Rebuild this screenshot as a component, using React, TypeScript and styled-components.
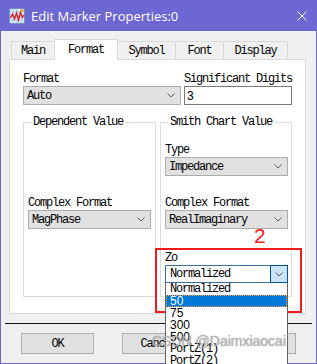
import React from 'react';
import styled, { createGlobalStyle } from 'styled-components';

const MONO = `"Liberation Mono", "Courier New", monospace`;
const SANS = `"Liberation Sans", Arial, sans-serif`;
const TITLE_BG = '#6c67d3';

const Global = createGlobalStyle`
    html, body {
        margin: 0;
        padding: 0;
        overflow: hidden;
        background: #f0f0f0;
    }
`;

const Window = styled.div`
    position: relative;
    width: 317px;
    height: 364px;
    box-sizing: border-box;
    border: 1px solid ${TITLE_BG};
    border-top: none;
    background: #f0f0f0;
    font-family: ${MONO};
    font-size: 12px;
    letter-spacing: -1.2px;
    color: #000;
`;

const TitleBar = styled.div`
    display: flex;
    align-items: center;
    height: 31px;
    margin: 0 -1px;
    padding-left: 9px;
    background: ${TITLE_BG};
    color: #fff;
`;

const Title = styled.span`
    margin-left: 6px;
    font-family: "Open Sans", ${SANS};
    font-size: 13px;
    letter-spacing: 0;
    flex: 1;
`;

const CloseBtn = styled.div`
    display: flex;
    width: 10px;
    height: 10px;
    margin-right: 10px;
`;

const Body = styled.div`
    padding: 8px 8px 0 8px;
`;

const TabRow = styled.div`
    display: flex;
    align-items: flex-end;
    height: 20px;
    padding-left: 2px;
`;

const Tab = styled.div<{ $w: number; $active?: boolean }>`
    position: relative;
    z-index: ${(p) => (p.$active ? 2 : 1)};
    display: flex;
    align-items: center;
    justify-content: center;
    box-sizing: border-box;
    width: ${(p) => p.$w}px;
    height: ${(p) => (p.$active ? 21 : 18)}px;
    margin-bottom: ${(p) => (p.$active ? -1 : 0)}px;
    margin-left: -1px;
    border: 1px solid #d9d9d9;
    border-bottom: none;
    background: ${(p) => (p.$active ? '#fff' : '#f0f0f0')};
    &:first-child {
        margin-left: 0;
    }
`;

const Panel = styled.div`
    position: relative;
    box-sizing: border-box;
    width: 297px;
    height: 255px;
    padding: 13px 0 0 13px;
    border: 1px solid #d9d9d9;
    background: #fff;
`;

const TopRow = styled.div`
    display: flex;
    gap: 3px;
`;

const Field = styled.div`
    display: flex;
    flex-direction: column;
`;

const Label = styled.div<{ $top?: number }>`
    height: 13px;
    line-height: 13px;
    margin-top: ${(p) => p.$top ?? 0}px;
    white-space: nowrap;
`;

const Combo = styled.div<{ $w: number }>`
    position: relative;
    display: flex;
    align-items: center;
    box-sizing: border-box;
    width: ${(p) => p.$w}px;
    height: 19px;
    padding-left: 3px;
    border: 1px solid #adadad;
    background: #e1e1e1;
`;

const ComboText = styled.span`
    flex: 1;
    white-space: nowrap;
`;

const ChevronBox = styled.span`
    display: flex;
    width: 18px;
    justify-content: center;
`;

const TextInput = styled.div`
    display: flex;
    align-items: center;
    box-sizing: border-box;
    width: 108px;
    height: 19px;
    padding-left: 2px;
    border: 1px solid #7a7a7a;
    font-family: ${SANS};
    font-size: 12px;
    letter-spacing: 0;
`;

const Groups = styled.div`
    display: flex;
    gap: 4px;
    margin-top: 11px;
`;

const Group = styled.fieldset<{ $w: number }>`
    box-sizing: border-box;
    width: ${(p) => p.$w}px;
    min-width: 0;
    height: 181px;
    margin: 0;
    padding: 0 4px;
    border: 1px solid #dcdcdc;
`;

const Legend = styled.legend`
    margin-left: 3px;
    padding: 0 3px 0 2px;
    line-height: 13px;
`;

const ZoWrap = styled.div`
    position: relative;
    width: 123px;
`;

const OpenCombo = styled.div`
    display: flex;
    box-sizing: border-box;
    height: 18px;
    border: 1px solid #3d6fa3;
    background: #fff;
`;

const OpenText = styled.span`
    flex: 1;
    display: flex;
    align-items: center;
    padding-left: 4px;
    white-space: nowrap;
`;

const ArrowBtn = styled.span`
    display: flex;
    align-items: center;
    justify-content: center;
    box-sizing: border-box;
    width: 18px;
    margin: -1px -1px -1px 0;
    border: 1px solid #005499;
    background: #cce4f7;
`;

const DropList = styled.div`
    position: absolute;
    z-index: 10;
    top: 100%;
    left: 0;
    right: 0;
    height: 90px;
    border: 1px solid #646464;
    border-top: none;
    background: #fff;
`;

const ListItem = styled.div<{ $sel?: boolean; $num?: boolean }>`
    box-sizing: border-box;
    height: 12px;
    line-height: 11px;
    padding-left: 3px;
    white-space: nowrap;
    font-family: ${(p) => (p.$num ? SANS : MONO)};
    font-size: ${(p) => (p.$num ? 12 : 12)}px;
    letter-spacing: ${(p) => (p.$num ? 0 : -1.2)}px;
    color: ${(p) => (p.$sel ? '#fff' : '#000')};
    background: ${(p) => (p.$sel ? '#0078d7' : 'transparent')};
    border: 1px dotted ${(p) => (p.$sel ? '#f3a53c' : 'transparent')};
    padding-top: 0;
    margin: 0;
`;

const Separator = styled.div`
    width: 307px;
    height: 1px;
    margin: 9px 0 0 -4px;
    background: #111;
`;

const ButtonRow = styled.div`
    display: flex;
    gap: 28px;
    margin: 9px 0 0 12px;
`;

const Button = styled.div`
    display: flex;
    align-items: center;
    justify-content: center;
    box-sizing: border-box;
    width: 73px;
    height: 21px;
    border: 1px solid #adadad;
    background: #e1e1e1;
`;

const Callout = styled.div`
    position: absolute;
    z-index: 5;
    left: 154px;
    top: 248px;
    width: 147px;
    height: 65px;
    box-sizing: border-box;
    border: 2px solid #f21b1b;
`;

const CalloutNumber = styled.div`
    position: absolute;
    z-index: 5;
    left: 253px;
    top: 225px;
    font-family: ${SANS};
    font-size: 21px;
    line-height: 21px;
    letter-spacing: 0;
    color: #f22020;
`;

const Watermark = styled.div`
    position: absolute;
    z-index: 20;
    left: 151px;
    top: 333px;
    font-family: ${SANS};
    font-size: 14px;
    line-height: 16px;
    letter-spacing: 0;
    white-space: nowrap;
    color: rgba(205, 205, 205, 0.8);
    text-shadow: 0 0 1px rgba(70, 70, 70, 0.8);
`;

const AppIcon = () => (
    <svg width="16" height="16" viewBox="0 0 16 16">
        <rect x="0.5" y="0.5" width="15" height="15" rx="1.5" fill="#dcebf7" stroke="#6f93c2" />
        <path d="M4 1v14M8 1v14M12 1v14M1 4h14M1 8h14M1 12h14" stroke="#9fc1e3" strokeWidth="0.8" />
        <polyline points="1.5,10 3.5,6 5.5,11 7.5,5 9.5,12 11.5,4.5 13.5,9.5 15,7" fill="none" stroke="#d7262b" strokeWidth="1.4" />
        <circle cx="13" cy="2.5" r="1.6" fill="#f5a21f" />
    </svg>
);

const Chevron = () => (
    <svg width="8" height="5" viewBox="0 0 8 5">
        <polyline points="0.5,0.5 4,4 7.5,0.5" fill="none" stroke="#5a5a5a" strokeWidth="1" />
    </svg>
);

const tabs: [string, number][] = [
    ['Main', 44],
    ['Format', 64],
    ['Symbol', 59],
    ['Font', 49],
    ['Display', 65],
];

const zoItems: [string, boolean][] = [
    ['Normalized', false],
    ['50', true],
    ['75', true],
    ['300', true],
    ['500', true],
    ['PortZ(1)', false],
    ['PortZ(2)', false],
];

const App = () => {
    return (
        <>
            <Global />
            <Window>
                <TitleBar>
                    <AppIcon />
                    <Title>Edit Marker Properties:0</Title>
                    <CloseBtn>
                        <svg width="10" height="10" viewBox="0 0 10 10">
                            <path d="M0.5 0.5L9.5 9.5M9.5 0.5L0.5 9.5" stroke="#fff" strokeWidth="1" />
                        </svg>
                    </CloseBtn>
                </TitleBar>
                <Body>
                    <TabRow>
                        {tabs.map(([name, w]) => (
                            <Tab key={name} $w={w} $active={name === 'Format'}>
                                {name}
                            </Tab>
                        ))}
                    </TabRow>
                    <Panel>
                        <TopRow>
                            <Field>
                                <Label>Format</Label>
                                <Combo $w={158}>
                                    <ComboText>Auto</ComboText>
                                    <ChevronBox><Chevron /></ChevronBox>
                                </Combo>
                            </Field>
                            <Field>
                                <Label>Significant Digits</Label>
                                <TextInput>3</TextInput>
                            </Field>
                        </TopRow>
                        <Groups>
                            <Group $w={133}>
                                <Legend>Dependent Value</Legend>
                                <Label $top={68}>Complex Format</Label>
                                <Combo $w={123}>
                                    <ComboText>MagPhase</ComboText>
                                    <ChevronBox><Chevron /></ChevronBox>
                                </Combo>
                            </Group>
                            <Group $w={132}>
                                <Legend>Smith Chart Value</Legend>
                                <Label $top={15}>Type</Label>
                                <Combo $w={123}>
                                    <ComboText>Impedance</ComboText>
                                    <ChevronBox><Chevron /></ChevronBox>
                                </Combo>
                                <Label $top={21}>Complex Format</Label>
                                <Combo $w={123}>
                                    <ComboText>RealImaginary</ComboText>
                                    <ChevronBox><Chevron /></ChevronBox>
                                </Combo>
                                <Label $top={23}>Zo</Label>
                                <ZoWrap>
                                    <OpenCombo>
                                        <OpenText>Normalized</OpenText>
                                        <ArrowBtn><Chevron /></ArrowBtn>
                                    </OpenCombo>
                                    <DropList>
                                        {zoItems.map(([text, num]) => (
                                            <ListItem key={text} $num={num} $sel={text === '50'}>
                                                {text}
                                            </ListItem>
                                        ))}
                                    </DropList>
                                </ZoWrap>
                            </Group>
                        </Groups>
                    </Panel>
                    <Separator />
                    <ButtonRow>
                        <Button>OK</Button>
                        <Button>Cancel</Button>
                        <Button>Help</Button>
                    </ButtonRow>
                </Body>
                <Callout />
                <CalloutNumber>2</CalloutNumber>
                <Watermark>CSDN @Daimxiaocai</Watermark>
            </Window>
        </>
    );
};

export default App;
